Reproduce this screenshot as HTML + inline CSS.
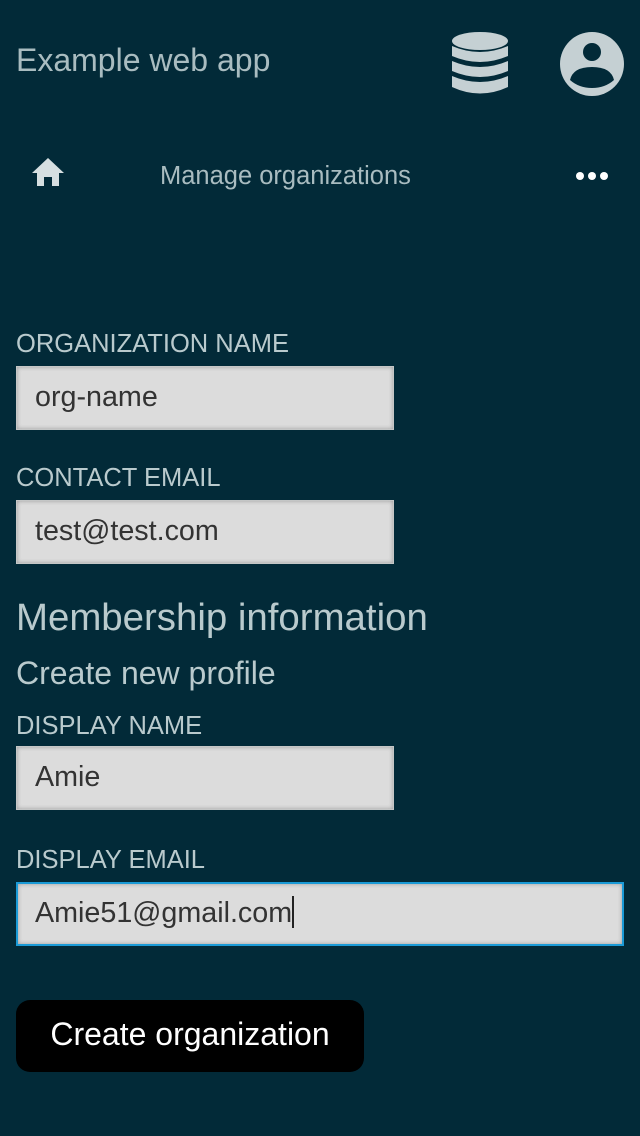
<!DOCTYPE html>
<html><head><meta charset="utf-8"><style>
*{margin:0;padding:0;box-sizing:border-box}
body{width:640px;height:1136px;background:#022a38;font-family:"Liberation Sans",sans-serif;color:#b4c6ca;position:relative;overflow:hidden}
.a{position:absolute;white-space:nowrap}
.lbl{font-size:25.5px;left:16px;color:#b9cacd}
.inp{position:absolute;left:16px;width:378px;height:64px;background:#dcdcdc;border:1px solid #c4c6c6;box-shadow:inset 0 0 4px rgba(0,0,0,.3);font-size:28.7px;color:#333;padding-left:18px;line-height:60px}
</style></head><body>
<div class="a" style="left:16px;top:42px;font-size:32px;color:#a9bcc0">Example web app</div>
<svg class="a" style="left:451px;top:32px" width="58" height="64" viewBox="0 0 58 64"><g fill="#c5d0d3">
<ellipse cx="29" cy="9" rx="28" ry="9"/>
<path d="M1 14 Q29 26 57 14 V24 Q29 36 1 24Z"/>
<path d="M1 29 Q29 41 57 29 V39 Q29 51 1 39Z"/>
<path d="M1 44 Q29 56 57 44 V55 Q29 68 1 55Z"/></g></svg>
<svg class="a" style="left:559px;top:32px" width="66" height="64" viewBox="0 0 66 64"><ellipse cx="33" cy="32" rx="32" ry="32" fill="#c5d0d3"/><circle cx="33" cy="20" r="9" fill="#022a38"/><path d="M11 48 Q14 35 33 35 Q52 35 55 48 Q46 56 33 56 Q20 56 11 48Z" fill="#022a38"/></svg>
<svg class="a" style="left:32px;top:158px" width="32" height="28" viewBox="0 0 32 28"><path d="M16 0 L32 15 H27 V28 H20 V19 H12 V28 H5 V15 H0Z" fill="#d6dfe1"/></svg>
<div class="a" style="left:160px;top:162px;font-size:25.5px;color:#a9bcc0">Manage organizations</div>
<svg class="a" style="left:575px;top:170px" width="34" height="12"><circle cx="5" cy="6" r="4" fill="#fff"/><circle cx="17" cy="6" r="4" fill="#fff"/><circle cx="29" cy="6" r="4" fill="#fff"/></svg>
<div class="a lbl" style="top:330px">ORGANIZATION NAME</div>
<div class="inp" style="top:366px">org-name</div>
<div class="a lbl" style="top:464px">CONTACT EMAIL</div>
<div class="inp" style="top:500px">test@test.com</div>
<div class="a" style="left:16px;top:596px;font-size:38.4px;color:#b9cacd">Membership information</div>
<div class="a" style="left:16px;top:655px;font-size:32px;color:#b9cacd">Create new profile</div>
<div class="a lbl" style="top:712px">DISPLAY NAME</div>
<div class="inp" style="top:746px">Amie</div>
<div class="a lbl" style="top:846px">DISPLAY EMAIL</div>
<div class="inp" style="top:882px;width:608px;border:2px solid #1a9ad6;line-height:58px;padding-left:17px">Amie51@gmail.com<span style="display:inline-block;width:2px;height:32px;background:#222;vertical-align:middle;margin-top:-4px"></span></div>
<div class="a" style="left:16px;top:1000px;width:348px;height:72px;background:#000;border-radius:14px;color:#fff;font-size:32px;text-align:center;line-height:68px">Create organization</div>
</body></html>
